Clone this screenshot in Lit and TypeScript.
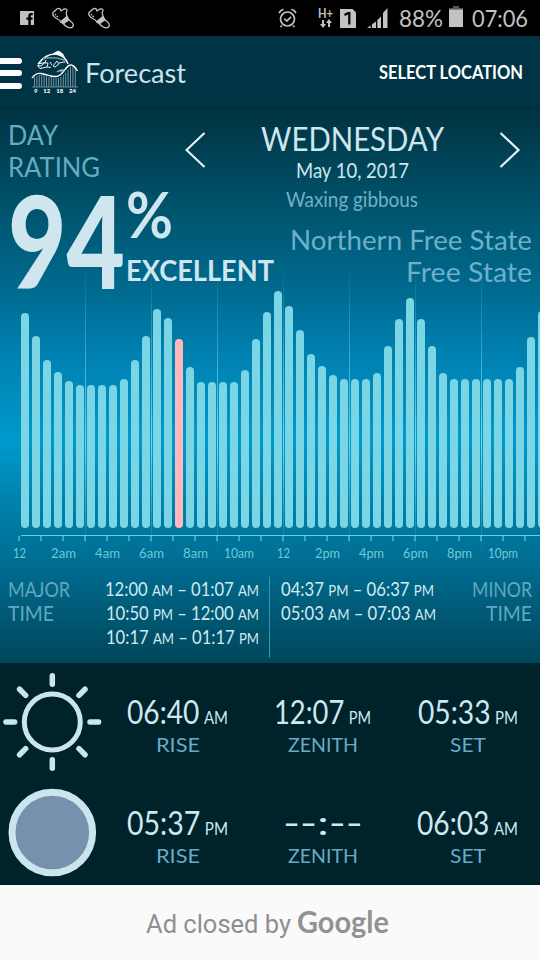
import { LitElement, html, css, svg } from 'lit';
import { customElement, property, query } from 'lit/decorators.js';
import { classMap } from 'lit/directives/class-map.js';
import { styleMap } from 'lit/directives/style-map.js';

// Squeezes or stretches its text horizontally to a given width
@customElement('fit-text')
export class FitText extends LitElement {
  @property({ type: Number }) w = 0;
  @query('.inner') inner!: HTMLElement;

  static styles = css`
    :host {
      display: inline-block;
      white-space: nowrap;
      text-align: left;
    }

    .inner {
      display: inline-block;
      transform-origin: 0 50%;
    }
  `;

  firstUpdated() {
    const natural = this.inner.getBoundingClientRect().width;
    this.style.width = `${this.w}px`;
    this.inner.style.transform = `scaleX(${this.w / natural})`;
  }

  render() {
    return html`<span class="inner"><slot></slot></span>`;
  }
}

@customElement('status-bar')
export class StatusBar extends LitElement {
  static styles = css`
    :host {
      display: flex;
      justify-content: space-between;
      align-items: center;
      box-sizing: border-box;
      height: 36px;
      padding: 0 12px 0 20px;
      background: #000;
      color: #c2c2c2;
      font-family: Lato, sans-serif;
      font-size: 24px;
      line-height: 36px;
    }

    svg {
      display: block;
      flex: none;
    }

    .left,
    .right {
      display: flex;
      align-items: center;
    }

    .left {
      gap: 14px;
    }

    .shoe {
      margin-left: 4px;
    }

    .shoe + .shoe {
      margin-left: 0;
    }

    .net {
      display: flex;
      flex-direction: column;
      align-items: center;
      margin: -2px 7px 0 20px;
      font-size: 14px;
      font-weight: 700;
      line-height: 12px;
    }

    .sim {
      margin-right: 11px;
    }

    .signal {
      margin-right: 11px;
    }

    .battery {
      margin: -3px 9px 0 6px;
    }
  `;

  shoe() {
    return html`
      <svg class="shoe" width="22" height="22" viewBox="0 0 22 22" fill="none" stroke="#c2c2c2" stroke-width="1.3" stroke-linejoin="round">
        <path d="M1 5.5L5 2Q7 .6 8.2 2L9 4L12 2Q15 1.2 15 3.5Q13.5 6.5 15.2 9.5L9 15Q7.5 12.5 4.5 11.5Q0 9 1 5.5Z" />
        <path d="M3.3 7Q4 9 6.5 10.2" stroke-dasharray="1.5 1" />
        <path d="M8.5 15L15 9.5L17 12.8L11.5 16.8Z" fill="#c2c2c2" />
        <path d="M17 13Q21.5 16 21.3 18.5Q20.5 21 17.5 20.8Q14 20 11.5 17" />
      </svg>
    `;
  }

  render() {
    return html`
      <div class="left">
        <svg width="14" height="14" viewBox="0 0 14 14">
          <path d="M0 0H14V14H10.8V8.8H12.6V6.5H10.8V5Q10.8 4.2 11.6 4.2H12.8V2H11Q8.3 2 8.3 4.8V6.5H6.4V8.8H8.3V14H0Z" fill="#c2c2c2" />
        </svg>
        ${this.shoe()} ${this.shoe()}
      </div>
      <div class="right">
        <svg width="20" height="20" viewBox="0 0 20 20" fill="none" stroke="#c2c2c2" stroke-width="1.7">
          <circle cx="9.5" cy="11" r="7" />
          <path d="M6.3 10.5L8.8 13L13 8.8M1 5Q2.5 2 5.5 1.2M13.5 1.2Q16.5 2 18 5M4 17.5L2.5 19M15 17.5L16.5 19" />
        </svg>
        <div class="net">
          <fit-text w="15">H+</fit-text>
          <svg width="12" height="9" viewBox="0 0 12 9" fill="#c2c2c2">
            <path d="M2 1H4V5H6L3 9L0 5H2ZM8 8V4H6L9 0L12 4H10V8Z" />
          </svg>
        </div>
        <svg class="sim" width="16" height="19" viewBox="0 0 16 19">
          <path d="M0 0H12.5L16 3.5V19H0Z" fill="#c2c2c2" />
          <path d="M4.5 6L8 4.2H9.3V15.5" fill="none" stroke="#000" stroke-width="2.2" />
        </svg>
        <svg class="signal" width="21" height="20" viewBox="0 0 21 20" fill="#c2c2c2">
          <path d="M0 20L3.7 17.5V20ZM5 16.3L9 13.5V20H5ZM10.3 12L14 8.5V20H10.3ZM16 5L20.5 0V20H16Z" />
        </svg>
        <fit-text w="44">88%</fit-text>
        <svg class="battery" width="14" height="21" viewBox="0 0 14 21">
          <path d="M4 0H10V2H14V4H0V2H4Z" fill="#555" />
          <path d="M0 3.5H14V21H0Z" fill="#c2c2c2" />
        </svg>
        <fit-text w="56">07:06</fit-text>
      </div>
    `;
  }
}

@customElement('app-bar')
export class AppBar extends LitElement {
  static styles = css`
    :host {
      display: flex;
      align-items: center;
      box-sizing: border-box;
      height: 72px;
      padding-right: 17px;
      background: #003344;
      border-bottom: 1px solid #002a37;
      font-family: Lato, sans-serif;
    }

    .menu {
      display: flex;
      flex-direction: column;
      gap: 6.5px;
      width: 22px;
      margin: 3px 9px 0 0;
    }

    .line {
      height: 6px;
      border-radius: 0 3px 3px 0;
      background: #fff;
    }

    .logo {
      display: flex;
      flex-direction: column;
      width: 48px;
      margin-right: 6px;
    }

    .logo svg {
      display: block;
    }

    .hours {
      display: flex;
      justify-content: space-between;
      padding: 0 3px;
      color: #fff;
      font-size: 6px;
      font-weight: 900;
      line-height: 6px;
    }

    .title {
      flex: 1;
      padding-top: 2px;
      color: #c9e4ee;
      font-size: 26px;
      line-height: 36px;
    }

    .select {
      padding-top: 1px;
      color: #fff;
      font-size: 19px;
      font-weight: 700;
      line-height: 36px;
    }
  `;

  render() {
    const xs = Array.from({ length: 18 }, (_, i) => 3.5 + i * 2.4);
    const tops = [27, 26, 25, 25, 25, 26, 27, 27, 28, 28, 28, 27, 25, 23, 20, 17, 16, 17];
    return html`
      <div class="menu">
        <div class="line"></div>
        <div class="line"></div>
        <div class="line"></div>
      </div>
      <div class="logo">
        <svg width="48" height="38" viewBox="0 0 48 38" fill="none" stroke="#fff">
          ${xs.map((x, i) => svg`<path d="M${x} ${tops[i]}V37" stroke="#7f9ca7" stroke-width=".9" />`)}
          <path d="M1 37H47" stroke="#8fa9b3" stroke-width=".7" />
          <path d="M1 28Q5 22.5 10 23.5C18 25 20 27 25 26.5C33 26 34 15 40 15Q43 15 46.5 21" stroke-width="1.4" />
          <path d="M7 14Q15 3.5 25 4Q34 5.5 37 14" stroke-width="1.4" />
          <path d="M22 3.8Q26 .5 28 1Q32 3 33.5 7Q29 4 22 3.8Z" fill="#fff" stroke-width=".4" />
          <path d="M7 14L14 12.5L10 16L6.5 15.5L9 18.5L16 17" stroke-width="1" />
          <path d="M15 10L14 13L17 13L16 17L20 17.5M19 12L21 15M22 16L26 11L28 14L24 17ZM28 13L33 12" stroke-width=".9" />
          <path d="M12 9Q22 6 33 10L34 13" stroke="#6f919d" stroke-width="1.6" />
          <path d="M26 22Q30 19 34 20M27 21L33 21" stroke="#a8c0c8" stroke-width="1.1" />
        </svg>
        <div class="hours"><span>9</span><span>12</span><span>18</span><span>24</span></div>
      </div>
      <div class="title"><fit-text w="101">Forecast</fit-text></div>
      <div class="select"><fit-text w="144">SELECT LOCATION</fit-text></div>
    `;
  }
}

@customElement('day-summary')
export class DaySummary extends LitElement {
  static styles = css`
    :host {
      display: flex;
      padding: 11px 8px 0 8px;
      color: #cfe6ef;
      font-family: Lato, sans-serif;
    }

    .rating {
      flex: none;
      width: 177px;
      white-space: nowrap;
    }

    .caption {
      display: flex;
      flex-direction: column;
      color: #66abc2;
      font-size: 26px;
      line-height: 32px;
    }

    .score {
      display: flex;
    }

    .value {
      margin: 1px 1px 0 0;
      font-size: 128px;
      font-weight: 900;
      line-height: 112px;
    }

    .side {
      display: flex;
      flex-direction: column;
    }

    .percent {
      font-size: 63px;
      font-weight: 700;
      line-height: 62px;
    }

    .verdict {
      font-size: 28px;
      font-weight: 700;
      line-height: 51px;
    }

    .info {
      flex: 1;
      display: flex;
      flex-direction: column;
      gap: 10px;
      padding-top: 4px;
    }

    .nav {
      display: flex;
      justify-content: space-between;
      padding-right: 11px;
    }

    .nav svg {
      margin-top: 9px;
    }

    .date {
      display: flex;
      flex-direction: column;
      align-items: center;
      margin-left: -2px;
      font-size: 21px;
      line-height: 29px;
    }

    .day {
      font-size: 32px;
      line-height: 32px;
    }

    .moon {
      color: #72b0c4;
      line-height: 30px;
    }

    .place {
      display: flex;
      flex-direction: column;
      align-items: flex-end;
      color: #6cb0ca;
      font-size: 27px;
      line-height: 32px;
    }
  `;

  render() {
    return html`
      <div class="rating">
        <div class="caption">
          <fit-text w="50">DAY</fit-text>
          <fit-text w="92">RATING</fit-text>
        </div>
        <div class="score">
          <fit-text class="value" w="117">94</fit-text>
          <div class="side">
            <fit-text class="percent" w="47">%</fit-text>
            <fit-text class="verdict" w="148">EXCELLENT</fit-text>
          </div>
        </div>
      </div>
      <div class="info">
        <div class="nav">
          <svg width="22" height="36" viewBox="0 0 22 36" fill="none" stroke="#e6f2f5" stroke-width="2.2">
            <path d="M19.5 1L1.5 18L19.5 35" />
          </svg>
          <div class="date">
            <fit-text class="day" w="183">WEDNESDAY</fit-text>
            <fit-text w="113">May 10, 2017</fit-text>
            <fit-text class="moon" w="132">Waxing gibbous</fit-text>
          </div>
          <svg width="22" height="36" viewBox="0 0 22 36" fill="none" stroke="#e6f2f5" stroke-width="2.2">
            <path d="M1.5 1L19.5 18L1.5 35" />
          </svg>
        </div>
        <div class="place">
          <fit-text w="242">Northern Free State</fit-text>
          <fit-text w="126">Free State</fit-text>
        </div>
      </div>
    `;
  }
}

// Bar heights, one for every half hour starting at midnight
const ACTIVITY = [
  215, 192, 168, 156, 147, 143, 143, 143, 143, 149, 168, 192, 219, 210, 189, 161,
  146, 146, 146, 146, 158, 189, 216, 237, 222, 198, 174, 162, 153, 149, 149, 149,
  155, 182, 209, 230, 209, 182, 155, 149, 149, 149, 149, 149, 149, 161, 191, 217,
];
const CURRENT = 14;
const HOURS = ['12', '2am', '4am', '6am', '8am', '10am', '12', '2pm', '4pm', '6pm', '8pm', '10pm'];
const HOUR_WIDTH: Record<number, number> = { 2: 13, 3: 25, 4: 30 };

@customElement('activity-chart')
export class ActivityChart extends LitElement {
  static styles = css`
    :host {
      display: grid;
      overflow: hidden;
    }

    .grid,
    .plot {
      grid-area: 1 / 1;
      min-width: 0;
    }

    .grid {
      display: flex;
      gap: 65px;
      height: 292px;
      margin-top: 154px;
      padding-left: 85px;
    }

    .rule {
      flex: none;
      width: 1px;
      background: linear-gradient(rgba(110, 215, 235, 0), rgba(110, 215, 235, 0.45) 30%, #6fd9f2 62%, rgba(110, 215, 235, 0));
    }

    .plot {
      display: flex;
      flex-direction: column;
      justify-content: flex-end;
    }

    .bars {
      display: flex;
      align-items: flex-end;
      gap: 3px;
      margin-bottom: 7px;
      padding-left: 21px;
    }

    .bar {
      flex: none;
      width: 8px;
      border-radius: 4px;
      background: #7ad5e4;
    }

    .now {
      background: #ffb9bb;
    }

    .axis {
      height: 1px;
      margin-left: 21px;
      background: #62cfe2;
    }

    .ticks {
      display: flex;
      gap: 20px;
      padding-left: 18px;
    }

    .tick {
      flex: none;
      width: 2px;
      height: 5px;
      background: #3fabc2;
    }

    .hours {
      display: flex;
      margin-left: -3px;
      color: #6ccad8;
      font-family: Lato, sans-serif;
      font-size: 13px;
      line-height: 24px;
    }

    .hour {
      flex: none;
      width: 44px;
      text-align: center;
    }
  `;

  render() {
    return html`
      <div class="grid">${Array.from({ length: 7 }, () => html`<div class="rule"></div>`)}</div>
      <div class="plot">
        <div class="bars">
          ${ACTIVITY.map((h, i) => html`
            <div class=${classMap({ bar: true, now: i === CURRENT })} style=${styleMap({ height: `${h}px` })}></div>
          `)}
        </div>
        <div class="axis"></div>
        <div class="ticks">${Array.from({ length: 24 }, () => html`<div class="tick"></div>`)}</div>
        <div class="hours">
          ${HOURS.map((h) => html`<div class="hour"><fit-text w=${HOUR_WIDTH[h.length]}>${h}</fit-text></div>`)}
        </div>
      </div>
    `;
  }
}

@customElement('bite-times')
export class BiteTimes extends LitElement {
  static styles = css`
    :host {
      display: flex;
      box-sizing: border-box;
      height: 98px;
      padding: 12px 8px 5px;
      color: #d3e9ef;
      font-family: Lato, sans-serif;
      font-size: 19px;
      line-height: 24px;
    }

    .label,
    .list {
      display: flex;
      flex-direction: column;
    }

    .label {
      color: #5fa8bf;
      font-size: 21px;
    }

    .list {
      flex: 1;
    }

    .major {
      align-items: flex-end;
      padding-right: 10px;
      border-right: 1px solid #3797b2;
    }

    .minor {
      padding-left: 11px;
    }

    .end {
      align-items: flex-end;
    }

    .half {
      display: flex;
      width: 262px;
    }

    .half + .half {
      flex: 1;
      width: auto;
    }

    small {
      font-size: 15px;
      line-height: 0;
    }
  `;

  range(w: number, from: string, a: string, to: string, b: string) {
    return html`<fit-text w=${w}>${from} <small>${a}</small> – ${to} <small>${b}</small></fit-text>`;
  }

  render() {
    return html`
      <div class="half">
        <div class="label">
          <fit-text w="62">MAJOR</fit-text>
          <fit-text w="46">TIME</fit-text>
        </div>
        <div class="list major">
          ${this.range(154, '12:00', 'AM', '01:07', 'AM')}
          ${this.range(153, '10:50', 'PM', '12:00', 'AM')}
          ${this.range(153, '10:17', 'AM', '01:17', 'PM')}
        </div>
      </div>
      <div class="half">
        <div class="list minor">
          ${this.range(153, '04:37', 'PM', '06:37', 'PM')}
          ${this.range(155, '05:03', 'AM', '07:03', 'AM')}
        </div>
        <div class="label end">
          <fit-text w="60">MINOR</fit-text>
          <fit-text w="46">TIME</fit-text>
        </div>
      </div>
    `;
  }
}

interface Phase {
  time: string;
  half: string;
  w: number;
  label: string;
  labelW: number;
}

@customElement('sky-row')
export class SkyRow extends LitElement {
  @property() body = 'sun';
  @property({ attribute: false }) phases: Phase[] = [];

  static styles = css`
    :host {
      display: flex;
      height: 111px;
      color: #cfe7f0;
      font-family: Lato, sans-serif;
    }

    .icon {
      flex: none;
      width: 105px;
      padding: 8px 0 0 2px;
      box-sizing: border-box;
    }

    .phase {
      display: flex;
      flex-direction: column;
      align-items: center;
      width: 145px;
      padding-top: 29px;
    }

    .time {
      font-size: 32px;
      line-height: 40px;
    }

    .half {
      font-size: 17px;
      line-height: 0;
      margin-left: -3px;
    }

    .label {
      color: #65acc6;
      font-size: 20px;
      line-height: 24px;
    }
  `;

  sun() {
    const rays = [0, 45, 90, 135, 180, 225, 270, 315];
    return svg`
      <circle cx="50.3" cy="51" r="28" fill="none" stroke="#cbe5ee" stroke-width="5" />
      ${rays.map((r) => svg`
        <path d="M50.3 4.7V13.3" transform="rotate(${r} 50.3 51)" stroke="#cbe5ee" stroke-width="5.5" stroke-linecap="round" />
      `)}
    `;
  }

  moon() {
    return svg`<circle cx="50.3" cy="50.5" r="40.3" fill="#7690ad" stroke="#cbe5ee" stroke-width="7" />`;
  }

  render() {
    return html`
      <div class="icon">
        <svg width="102" height="102" viewBox="0 0 102 102">${this.body === 'sun' ? this.sun() : this.moon()}</svg>
      </div>
      ${this.phases.map((p) => html`
        <div class="phase">
          <fit-text class="time" w=${p.w}>${p.time}${p.half ? html` <span class="half">${p.half}</span>` : ''}</fit-text>
          <fit-text class="label" w=${p.labelW}>${p.label}</fit-text>
        </div>
      `)}
    `;
  }
}

const SUN: Phase[] = [
  { time: '06:40', half: 'AM', w: 101, label: 'RISE', labelW: 44 },
  { time: '12:07', half: 'PM', w: 97, label: 'ZENITH', labelW: 70 },
  { time: '05:33', half: 'PM', w: 100, label: 'SET', labelW: 36 },
];

const MOON: Phase[] = [
  { time: '05:37', half: 'PM', w: 101, label: 'RISE', labelW: 44 },
  { time: '--:--', half: '', w: 80, label: 'ZENITH', labelW: 70 },
  { time: '06:03', half: 'AM', w: 101, label: 'SET', labelW: 36 },
];

@customElement('app-root')
export class AppRoot extends LitElement {
  static styles = css`
    :host {
      display: block;
      width: 540px;
      height: 960px;
      overflow: hidden;
    }

    .forecast {
      height: 555px;
      background: linear-gradient(#003240, #00556f 19%, #006b90 33%, #0080b0 44%, #0099cc 60%, #0080aa 72%, #006d92 82%, #00465a);
    }

    .stage {
      display: grid;
      height: 457px;
    }

    .stage > * {
      grid-area: 1 / 1;
      min-width: 0;
    }

    .sky {
      height: 222px;
      background: #00222b;
    }

    .ad {
      display: flex;
      justify-content: center;
      align-items: baseline;
      gap: 6px;
      box-sizing: border-box;
      height: 75px;
      padding: 16px 6px 0 0;
      background: #fafafa;
      color: #8f8f8f;
      font-family: Roboto, sans-serif;
      font-size: 26px;
      line-height: 40px;
    }

    .brand {
      color: #929292;
      font-family: Lato, sans-serif;
      font-size: 30px;
      font-weight: 700;
    }
  `;

  render() {
    return html`
      <status-bar></status-bar>
      <app-bar></app-bar>
      <div class="forecast">
        <div class="stage">
          <activity-chart></activity-chart>
          <day-summary></day-summary>
        </div>
        <bite-times></bite-times>
      </div>
      <div class="sky">
        <sky-row body="sun" .phases=${SUN}></sky-row>
        <sky-row body="moon" .phases=${MOON}></sky-row>
      </div>
      <div class="ad">
        <fit-text w="145">Ad closed by</fit-text>
        <fit-text class="brand" w="92">Google</fit-text>
      </div>
    `;
  }
}
